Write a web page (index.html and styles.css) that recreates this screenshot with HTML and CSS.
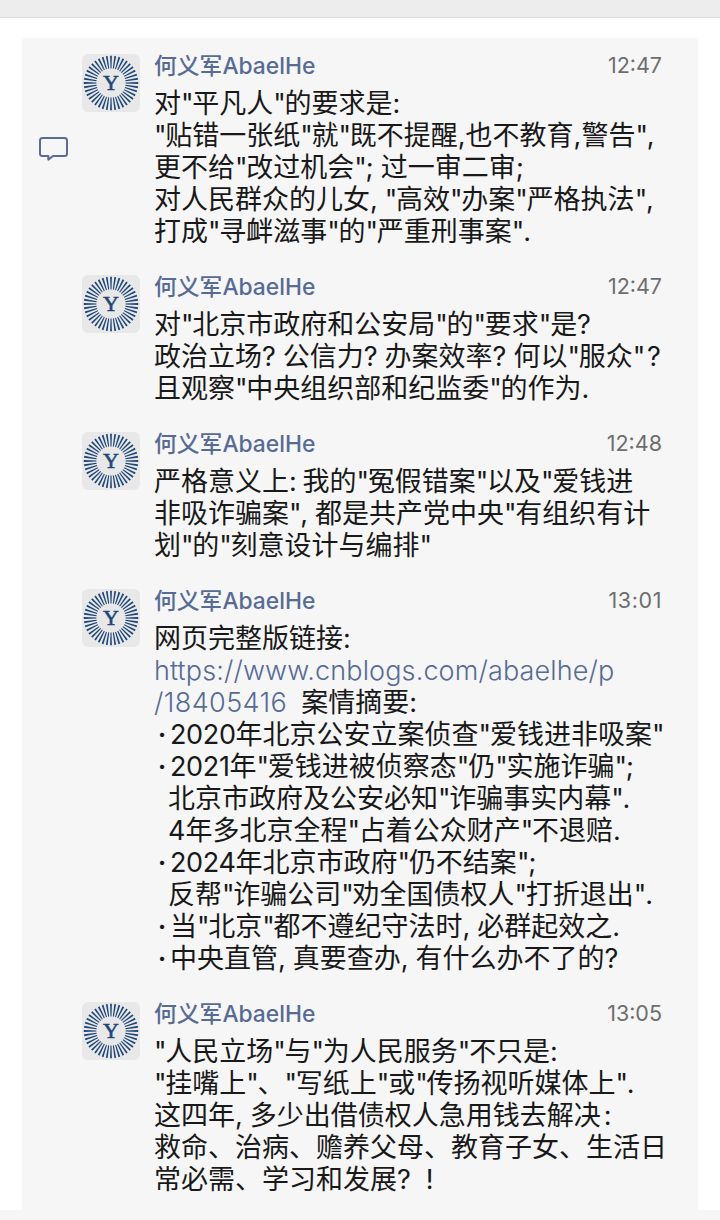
FILE: index.html
```html
<!DOCTYPE html>
<html lang="zh-CN">
<head>
<meta charset="utf-8">
<title>何义军AbaelHe</title>
<link rel="stylesheet" href="styles.css">
</head>
<body>
<svg class="defs" aria-hidden="true">
  <symbol id="rays" viewBox="0 0 58 58">
    <path id="ray" d="M28.5 14.4L28.1 1.8H29.9L29.5 14.4Z"/>
    <use href="#ray" transform="rotate(9 29 29)"/>
    <use href="#ray" transform="rotate(18 29 29)"/>
    <use href="#ray" transform="rotate(27 29 29)"/>
    <use href="#ray" transform="rotate(36 29 29)"/>
  </symbol>
  <symbol id="seal" viewBox="0 0 58 58">
    <g class="rays">
      <use href="#rays" width="58" height="58"/>
      <use href="#rays" width="58" height="58" transform="rotate(45 29 29)"/>
      <use href="#rays" width="58" height="58" transform="rotate(90 29 29)"/>
      <use href="#rays" width="58" height="58" transform="rotate(135 29 29)"/>
      <use href="#rays" width="58" height="58" transform="rotate(180 29 29)"/>
      <use href="#rays" width="58" height="58" transform="rotate(225 29 29)"/>
      <use href="#rays" width="58" height="58" transform="rotate(270 29 29)"/>
      <use href="#rays" width="58" height="58" transform="rotate(315 29 29)"/>
    </g>
    <text class="letter" x="29" y="36.3" text-anchor="middle">Y</text>
  </symbol>
</svg>
<div class="topbar"></div>
<main class="page">
  <section class="comments">
    <div class="rail">
      <svg class="bubble" viewBox="0 0 32 28"><path d="M4.5 2H26.5Q29 2 29 4.5V17.5Q29 20 26.5 20H15L10.3 23.6V20H4.5Q2 20 2 17.5V4.5Q2 2 4.5 2Z"/></svg>
    </div>
    <div class="list">
      <article class="comment">
        <svg class="avatar"><use href="#seal"/></svg>
        <div class="body">
          <header class="head"><span class="name">何义军AbaelHe</span><time class="time">12:47</time></header>
          <div class="text">
            <p>对<i>"</i>平凡人<i>"</i>的要求是<i>:</i></p>
            <p><i>"</i>贴错一张纸<i>"</i>就<i>"</i>既不提醒,也不教育,警告<i>"</i>,</p>
            <p>更不给<i>"</i>改过机会<i>"</i>; 过一审二审;</p>
            <p>对人民群众的儿女, <i>"</i>高效<i>"</i>办案<i>"</i>严格执法<i>"</i>,</p>
            <p>打成<i>"</i>寻衅滋事<i>"</i>的<i>"</i>严重刑事案<i>"</i>.</p>
          </div>
        </div>
      </article>
      <article class="comment">
        <svg class="avatar"><use href="#seal"/></svg>
        <div class="body">
          <header class="head"><span class="name">何义军AbaelHe</span><time class="time">12:47</time></header>
          <div class="text">
            <p>对<i>"</i>北京市政府和公安局<i>"</i>的<i>"</i>要求<i>"</i>是?</p>
            <p>政治立场? 公信力? 办案效率? 何以<i>"</i>服众<i>"</i><span class="mark">?</span></p>
            <p>且观察<i>"</i>中央组织部和纪监委<i>"</i>的作为.</p>
          </div>
        </div>
      </article>
      <article class="comment">
        <svg class="avatar"><use href="#seal"/></svg>
        <div class="body">
          <header class="head"><span class="name">何义军AbaelHe</span><time class="time">12:48</time></header>
          <div class="text">
            <p>严格意义上<i>:</i> 我的<i>"</i>冤假错案<i>"</i>以及<i>"</i>爱钱进</p>
            <p>非吸诈骗案<i>"</i>, 都是共产党中央<i>"</i>有组织有计</p>
            <p>划<i>"</i>的<i>"</i>刻意设计与编排<i>"</i></p>
          </div>
        </div>
      </article>
      <article class="comment">
        <svg class="avatar"><use href="#seal"/></svg>
        <div class="body">
          <header class="head"><span class="name">何义军AbaelHe</span><time class="time wide">13:01</time></header>
          <div class="text">
            <p>网页完整版链接:</p>
            <p><a class="link">https://www.cnblogs.com/abaelhe/p</a></p>
            <p><a class="link digits">/18405416</a>  案情摘要:</p>
            <p><span class="dot">·</span><span class="year">2020</span>年北京公安立案侦查<i>"</i>爱钱进非吸案<i>"</i></p>
            <p><span class="dot">·</span><span class="year">2021</span>年<i>"</i>爱钱进被侦察态<i>"</i>仍<i>"</i>实施诈骗<i>"</i>;</p>
            <p class="indent">北京市政府及公安必知<i>"</i>诈骗事实内幕<i>"</i>.</p>
            <p class="indent">4年多北京全程<i>"</i>占着公众财产<i>"</i>不退赔.</p>
            <p><span class="dot">·</span><span class="year">2024</span>年北京市政府<i>"</i>仍不结案<i>"</i>;</p>
            <p class="indent">反帮<i>"</i>诈骗公司<i>"</i>劝全国债权人<i>"</i>打折退出<i>"</i>.</p>
            <p><span class="dot">·</span>当<i>"</i>北京<i>"</i>都不遵纪守法时, 必群起效之.</p>
            <p><span class="dot">·</span>中央直管, 真要查办, 有什么办不了的?</p>
          </div>
        </div>
      </article>
      <article class="comment">
        <svg class="avatar"><use href="#seal"/></svg>
        <div class="body">
          <header class="head"><span class="name">何义军AbaelHe</span><time class="time">13:05</time></header>
          <div class="text">
            <p><i>"</i>人民立场<i>"</i>与<i>"</i>为人民服务<i>"</i>不只是:</p>
            <p><i>"</i>挂嘴上<i>"</i>、<i>"</i>写纸上<i>"</i>或<i>"</i>传扬视听媒体上<i>"</i>.</p>
            <p>这四年, 多少出借债权人急用钱去解决<span class="mark">:</span></p>
            <p>救命、治病、赡养父母、教育子女、生活日</p>
            <p>常必需、学习和发展? <span class="mark last">!</span></p>
          </div>
        </div>
      </article>
    </div>
  </section>
</main>
</body>
</html>
```
FILE: styles.css
```css
* { box-sizing: border-box; }
body {
  margin: 0;
  height: 1220px;
  overflow: hidden;
  background: #f6f6f7;
  color: #191919;
  font-family: Inter, "Noto Sans CJK SC", sans-serif;
}
.defs { display: none; }
.topbar { height: 18px; background: #ededed; border-bottom: 1px solid #dcdcdc; }
.page { height: 1192px; padding: 20px 22px 0; background: #fff; }
.comments {
  display: flex;
  height: 1172px;
  padding: 16px 30px 0 16px;
  background: #f6f6f7;
  border-radius: 4px 4px 0 0;
}
.rail { flex: none; width: 44px; padding-top: 82px; }
.bubble { display: block; width: 32px; height: 28px; fill: none; stroke: #5b6c93; stroke-width: 2; stroke-linejoin: round; }
.list { flex: 1; display: flex; flex-direction: column; gap: 28px; }
.comment { display: flex; gap: 14px; }
.avatar { flex: none; width: 58px; height: 58px; border-radius: 6px; background: #e8e8e9; }
.rays { fill: #1d4678; }
.letter { font: 22px "Liberation Serif", serif; fill: #1d4678; stroke: #1d4678; stroke-width: .6px; }
.body { flex: 1; min-width: 0; }
.head { display: flex; justify-content: space-between; align-items: center; height: 20px; margin-bottom: 13px; padding-right: 6px; }
.name { color: #576b95; font-size: 22.8px; font-weight: 500; white-space: nowrap; }
.time { padding-top: 2px; color: #6e6e6e; font-size: 21.5px; }
.time.wide { letter-spacing: .6px; }
.text p { margin: 0; height: 32px; font-size: 27px; line-height: 33px; white-space: pre; word-spacing: -.6px; }
.text .indent { padding-left: 14px; }
.text i { font-style: normal; letter-spacing: -1.3px; }
.year { letter-spacing: -.35px; }
.dot { display: inline-block; width: 16px; text-align: center; font-weight: 600; }
.mark { margin-left: 3px; }
.mark.last { margin-left: 8px; }
.link { color: #576b95; font-weight: 350; letter-spacing: .12px; }
.link.digits { letter-spacing: .4px; }
```
